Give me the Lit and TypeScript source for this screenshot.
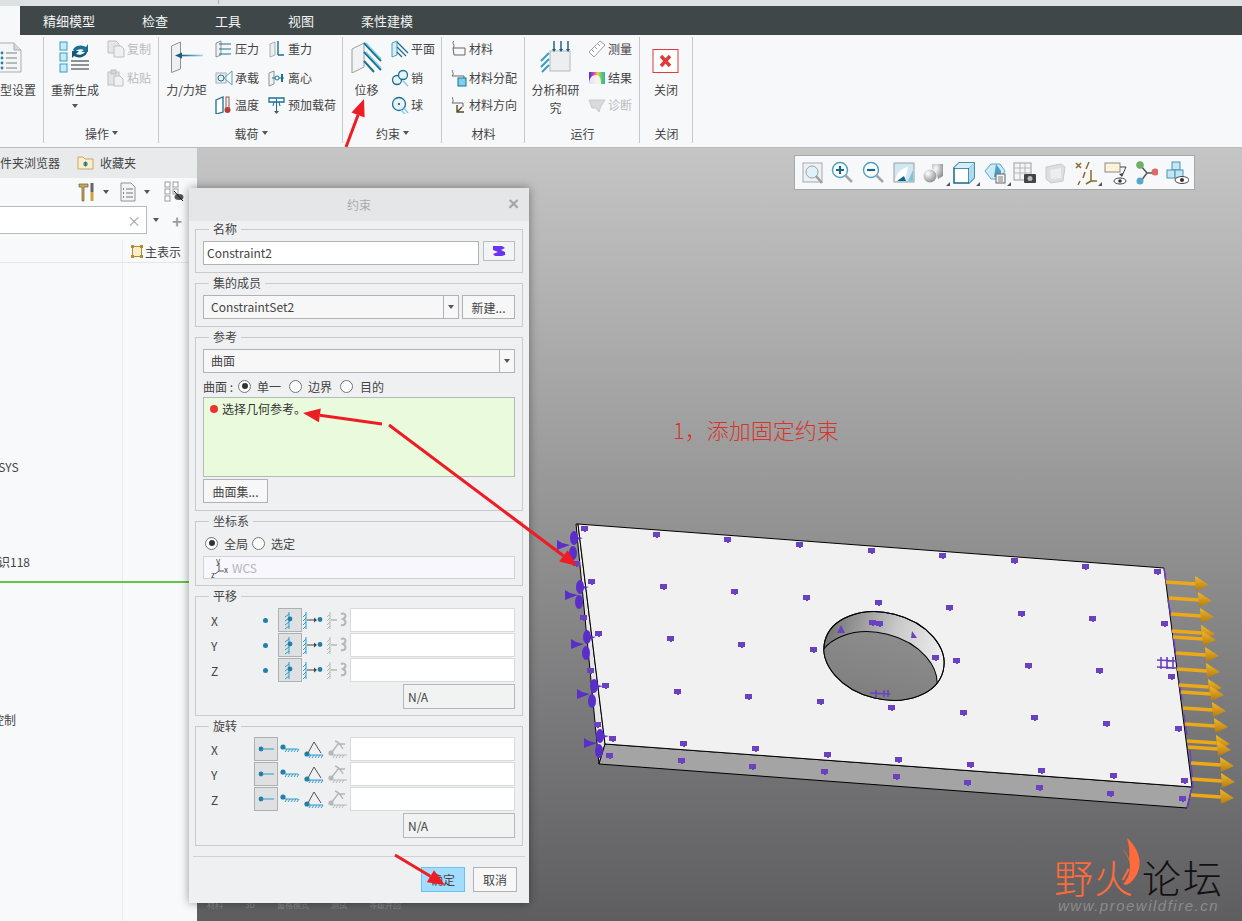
import { LitElement, html, css, svg } from "lit";
import { customElement } from "lit/decorators.js";

const TEAL = "#1c6f92";
const SKY = "#79cdea";
const GREY = "#a9aeb2";

// ---- ribbon icons, big ones are 32x32
const bigIcons: Record<string, unknown> = {
  doc: svg`<path d="M3 2h15l7 7v22H3z" fill="#f3f5f7" stroke="#a8adb1"/><path d="M18 2v7h7" fill="#d5dadd" stroke="#a8adb1"/>
    <g fill="#2a7ea6"><circle cx="6" cy="12" r="1.4"/><circle cx="6" cy="17" r="1.4"/><circle cx="6" cy="22" r="1.4"/><circle cx="6" cy="27" r="1.4"/></g>
    <path d="M10 12h11M10 17h11M10 22h11M10 27h11" stroke="#7b8186"/>`,
  regen: svg`<g fill="#c4ecf8" stroke="#3a9cc0"><rect x="1" y="1" width="7" height="8"/><rect x="1" y="12" width="7" height="8"/><rect x="1" y="23" width="7" height="8"/></g>
    <path d="M14 9a8 6 0 0 1 13-3l2-3v8h-7l3-2a6 4 0 0 0-9 2z" fill="${TEAL}"/><path d="M28 11a8 6 0 0 1-13 4l-2 2V10h7l-3 3a6 4 0 0 0 9-2z" fill="#125a78"/>
    <path d="M12 20h18M12 24h18M12 28h18" stroke="#8d9296" stroke-width="2"/>`,
  force: svg`<path d="M0.500 5l9-4v27l-9 3.500z" fill="#eef0f1" stroke="#8e9396"/><path d="M4 14.500l7-3v6z" fill="#155f80"/>
    <path d="M10 14.500h22" stroke="url(#fade)" stroke-width="1.600"/>`,
  disp: svg`<path d="M1 8l12-6v24L1 32z" fill="#f1f2f3" stroke="#9a9ea1"/>
    <path d="M13 2l17 18M13 11l17 18M13 20l10 11" stroke="${TEAL}" stroke-width="2"/><path d="M15 2l15 16M15 11l15 16" stroke="${SKY}" stroke-width="1.200"/>`,
  run: svg`<rect x="10" y="10" width="20" height="20" fill="#eceef0" stroke="#b6babc"/>
    <path d="M14 0v8M21 0v8M28 0v8" stroke="#165c7d" stroke-width="1.4"/><path d="M12 8l2 3 2-3zM19 8l2 3 2-3zM26 8l2 3 2-3z" fill="#165c7d"/>
    <path d="M1 20l8-8M1 26l8-8M2 31l7-7" stroke="#3a9cc0" stroke-width="2"/>`,
  close: svg`<rect x="3" y="8.5" width="25" height="23" fill="#fff" stroke="#e0393e"/><path d="M11 15l9 10M20 15l-9 10" stroke="#e0393e" stroke-width="3.4"/>`,
};

// small ones are 18x18
const smallIcons: Record<string, unknown> = {
  copy: svg`<path d="M1 1h8l3 3v9H1z" fill="#e4e6e8" stroke="#bdc1c4"/><path d="M7 6h7l3 3v8H7z" fill="#eef0f1" stroke="#bdc1c4"/>`,
  paste: svg`<rect x="1" y="3" width="11" height="13" fill="#e2e4e6" stroke="#bdc1c4"/><rect x="4" y="1" width="5" height="4" fill="#d2d5d8" stroke="#bdc1c4"/><path d="M7 7h6l3 3v7H7z" fill="#f0f1f2" stroke="#bdc1c4"/>`,
  press: svg`<path d="M1 3l5-2v14l-5 2z" fill="#f0f1f2" stroke="#8e9396"/><path d="M4 4h12M4 9h12M4 14h12" stroke="${TEAL}" stroke-width="1.2"/>`,
  grav: svg`<path d="M2 4l5-2v13l-5 2z" fill="#eceeef" stroke="${GREY}"/><path d="M10 1v14M10 15h6" stroke="${TEAL}" stroke-width="1.4"/>`,
  bear: svg`<rect x="1" y="4" width="10" height="10" fill="#eceeef" stroke="${GREY}"/><circle cx="6" cy="9" r="3" fill="none" stroke="${TEAL}"/><path d="M9 9l8-7v14z" fill="none" stroke="#5f9fb8"/>`,
  cent: svg`<path d="M1 4l5-2v13l-5 2z" fill="#f0f1f2" stroke="#8e9396"/><path d="M4 9h12" stroke="${TEAL}"/><circle cx="9" cy="9" r="2" fill="#fff" stroke="${TEAL}"/><path d="M14 5v8" stroke="${TEAL}" stroke-width="2"/>`,
  temp: svg`<path d="M1 4l7-3v15l-7 2z" fill="#fff" stroke="${TEAL}" stroke-width="1.3"/><rect x="11" y="1" width="3" height="12" fill="#f1f2f3" stroke="#8b5a55"/><circle cx="12.5" cy="14" r="3" fill="#b5403a"/>`,
  preload: svg`<path d="M1 2h15v4H1z" fill="#fff" stroke="${TEAL}" stroke-width="1.3"/><path d="M6 6l-1 4M11 6l1 4M8.5 3v13" stroke="${TEAL}"/><path d="M6 15h5l-2.500 3z" fill="#555"/>`,
  plane: svg`<path d="M1 3l5-2v14l-5 2z" fill="#d8eef7" stroke="#4a9fc0"/><path d="M6 2l11 11M6 7l9 9M6 12l5 5" stroke="${TEAL}" stroke-width="1.3"/>`,
  pin: svg`<circle cx="6" cy="11" r="4.500" fill="#e6f4fa" stroke="${TEAL}" stroke-width="1.3"/><circle cx="12" cy="6" r="4.500" fill="#e6f4fa" stroke="${TEAL}" stroke-width="1.3"/><path d="M12 12l5 5" stroke="${SKY}" stroke-width="1.4"/>`,
  ball: svg`<circle cx="8" cy="8" r="6.500" fill="#e6f4fa" stroke="${TEAL}" stroke-width="1.3"/><circle cx="8" cy="8" r="1" fill="#333"/><path d="M13 12l4 5M10 14l4 4" stroke="${SKY}" stroke-width="1.3"/>`,
  mat: svg`<path d="M5 1c-3 2 2 4-1 7M4 8h12v7H5z" fill="none" stroke="#666"/>`,
  matAssign: svg`<path d="M4 1c-2 2 2 3-1 6h12v5" fill="none" stroke="#666"/><rect x="9" y="9" width="8" height="8" fill="#7fd0ee" stroke="${TEAL}"/>`,
  matDir: svg`<path d="M4 1c-2 2 2 3-1 6h11v4" fill="none" stroke="#666"/><path d="M8 9v7h7M8 16l5-5" fill="none" stroke="#5b4a2a" stroke-width="1.4"/>`,
  measure: svg`<path d="M1 12L12 1l5 4L6 17z" fill="#fff" stroke="#9aa0a4"/><path d="M4 10l2 2M7 7l2 2M10 4l2 2" stroke="#9aa0a4"/>`,
  result: svg`<rect x="1" y="3" width="16" height="12" fill="url(#rainbow)"/><path d="M1 15c0-6 3-9 7-9s5 4 5 9" fill="#f7f8fa" opacity=".9"/>`,
  diag: svg`<path d="M1 4h16l-4 6-2 6-3-4H4z" fill="#d8dbdd" stroke="#c7cacc"/>`,
};

// ---- view toolbar, 24x24 each
const viewIcons = [
  svg`<rect x="2" y="2" width="19" height="19" fill="#eef0f2" stroke="#a6abae"/><circle cx="11" cy="11" r="6" fill="#dff1f9" stroke="#8fa9b5"/><path d="M15 15l6 7" stroke="#9aa0a4" stroke-width="2.500"/>`,
  svg`<circle cx="9" cy="9" r="7.500" fill="#fff" stroke="#4d9fbe" stroke-width="1.4"/><path d="M5 9h8M9 5v8" stroke="#17698c" stroke-width="2.200"/><path d="M14 14l7 7" stroke="#a2a7aa" stroke-width="2.500"/>`,
  svg`<circle cx="9" cy="9" r="7.500" fill="#fff" stroke="#4d9fbe" stroke-width="1.4"/><path d="M5 9h8" stroke="#17698c" stroke-width="2.200"/><path d="M14 14l7 7" stroke="#a2a7aa" stroke-width="2.500"/>`,
  svg`<rect x="2" y="2" width="20" height="19" fill="#d2e8f0" stroke="#9aa0a4"/><path d="M3 20c1-8 7-13 13-14l-3 14z" fill="#fff"/><path d="M5 20l7-5 2 5z" fill="#14688c"/><path d="M16 20l5-11v11z" fill="#7cc4df"/>`,
  svg`<circle cx="8" cy="15" r="6.500" fill="url(#ball)"/><path d="M10 3h11v12l-5 3-2-8-4-2z" fill="url(#ball)"/>`,
  svg`<path d="M2 7h15v15H2zM2 7l5-5h15v15l-5 5M17 7l5-5" fill="#fff" stroke="#14688c" stroke-width="1.500"/><path d="M17 7l5-5v15l-5 5z" fill="#a9dcef"/><path d="M2 7l5-5h15l-5 5z" fill="#d5eef7"/>`,
  svg`<path d="M2 10l6-7h9l5 7-5 8H8z" fill="#cdeaf6" stroke="#5aa7c6"/><path d="M13 3l5 7v6h-7z" fill="#4d9fc2"/><rect x="13" y="13" width="9" height="9" fill="#f1f2f3" stroke="#666"/><path d="M15 16h5M15 18h5M15 20h5" stroke="#666" stroke-width=".8"/>`,
  svg`<rect x="1" y="2" width="17" height="17" fill="#f4f5f6" stroke="#9a9ea1"/><path d="M1 7h17M1 12h17M7 2v17M12 2v17" stroke="#b4b8bb"/><rect x="11" y="13" width="12" height="9" rx="1" fill="#444"/><circle cx="17" cy="17.500" r="2.500" fill="#bbb"/>`,
  svg`<path d="M3 6l15-3 4 3-2 14-12 2-5-4z" fill="#dcdfe1" stroke="#c8cbcd"/><path d="M7 9l11-2v10l-10 1z" fill="#eceeef"/>`,
  svg`<g stroke="#8a6a2a" stroke-width="1.500"><path d="M2 2l5 5M7 2L2 7M15 1l-3 7M11 11l-2 6M6 20l-2 4"/></g><path d="M17 9v11h6M17 20l-5 3" fill="none" stroke="#8a6a2a" stroke-width="1.500"/>`,
  svg`<rect x="1" y="2" width="15" height="9" fill="#fbf2d9" stroke="#8b8b80"/><path d="M16 6h6l-4 9" fill="none" stroke="#444"/><path d="M15 13l3 3 1-4z" fill="#444"/><ellipse cx="16" cy="20" rx="6" ry="3" fill="#fff" stroke="#444"/><circle cx="16" cy="20" r="1.800" fill="#333"/>`,
  svg`<path d="M7 5l6 7-6 8M13 12h7" fill="none" stroke="#555" stroke-width="1.500"/><circle cx="6" cy="4" r="3.500" fill="#6fb36a" stroke="#5a9557" stroke-width=".5"/><circle cx="21" cy="11" r="3.500" fill="#dc6a6a"/><circle cx="6" cy="20" r="3.500" fill="#57a6cc"/>`,
  svg`<g fill="#c3e6f4" stroke="#4d93b1"><rect x="7" y="1" width="8" height="8"/><rect x="2" y="9" width="8" height="8"/><rect x="10" y="9" width="8" height="8"/></g><ellipse cx="17" cy="19" rx="7" ry="3.500" fill="#fff" stroke="#444"/><circle cx="17" cy="19" r="2" fill="#333"/>`,
];
const viewHasCorner = [false, false, false, false, true, true, true, false, false, true, false, false, false];

// ---- dialog dof icons, 22x24
const dofIcons = {
  fixed: svg`<path d="M10 4v17M10 6l-4 3M10 10l-4 3M10 14l-4 3M10 18l-4 3" stroke="#2b9ccb" fill="none"/><circle cx="11" cy="11" r="2.400" fill="#237fa6"/>`,
  slide: svg`<path d="M3 4v17M3 6l-3 3M3 10l-3 3M3 14l-3 3M3 18l-3 3" stroke="#2b9ccb" fill="none"/><path d="M4 12h9" stroke="#444"/><path d="M11 9.500l3 2.500-3 2.500z" fill="#444"/><circle cx="17" cy="11.500" r="2.400" fill="#237fa6"/>`,
  user: svg`<path d="M3 4v17M3 6l-3 3M3 10l-3 3M3 14l-3 3M3 18l-3 3" stroke="#b5b8ba" fill="none"/><path d="M4 12h6" stroke="#999"/><path d="M14 6c5-2 6 3 2 5 4 2 3 7-2 6" fill="none" stroke="#b5b8ba" stroke-width="2"/>`,
  rotFixed: svg`<circle cx="4" cy="10" r="2.600" fill="#237fa6"/><path d="M6 12h13" stroke="#2b9ccb"/><path d="M8 12l-2 3M11 12l-2 3M14 12l-2 3M17 12l-2 3M20 12l-2 3" stroke="#2b9ccb"/>`,
  rotAngle: svg`<circle cx="4" cy="17" r="2.600" fill="#237fa6"/><path d="M5 16L11 5l7 11" fill="none" stroke="#555"/><path d="M5 18h15M8 18l-2 3M11 18l-2 3M14 18l-2 3M17 18l-2 3M20 18l-2 3" stroke="#2b9ccb"/>`,
  rotUser: svg`<circle cx="4" cy="16" r="2.600" fill="#b4b7b9"/><path d="M5 15l6-8h7M8 4c4 1 6 4 8 8" fill="none" stroke="#b4b7b9" stroke-width="1.400"/><path d="M5 18h15M8 18l-2 3M11 18l-2 3M14 18l-2 3M17 18l-2 3" stroke="#b4b7b9"/>`,
};

// ---- mesh of the plate, read off the reference
const marks = [
  [584,529],[656,535],[727,540],[799,545],[871,551],[942,556],[1014,561],[1085,567],[1157,572],
  [591,582],[663,587],[734,592],[806,598],[878,603],[949,608],[1021,614],[1092,619],[1164,624],
  [598,634],[670,639],[741,645],[813,650],[956,661],[1028,666],[1099,671],[1171,677],
  [605,686],[677,692],[748,697],[820,702],[891,708],[963,713],[1034,718],[1106,724],[1178,729],
  [612,739],[683,744],[755,749],[827,755],[898,760],[970,765],[1041,771],[1113,776],[1184,781],
  [609,756],[681,761],[752,767],[824,772],[896,777],[967,783],[1039,788],[1110,794],[1182,799],
  [872,623],[879,624],[935,658],[576,564],[583,618],[590,671],[597,725],
];
const clusters = [
  [574,538,563,545,573,553],[580,587,571,595,579,602],[587,637,577,644,586,653],
  [594,686,583,694,592,701],[600,736,590,743,599,751],
];
const loads = [
  [1166,582],[1169,598],[1171,614],[1172,631],[1173,637],[1176,653],[1177,669],[1179,685],[1181,692],
  [1183,708],[1185,724],[1187,741],[1188,747],[1191,763],[1192,779],[1191,795],
];

const redArrow = (x1: number, y1: number, x2: number, y2: number) => {
  const a = Math.atan2(y2 - y1, x2 - x1);
  const bx = x2 - 17 * Math.cos(a);
  const by = y2 - 17 * Math.sin(a);
  const nx = -Math.sin(a) * 7;
  const ny = Math.cos(a) * 7;
  return svg`<line x1=${x1} y1=${y1} x2=${bx} y2=${by} stroke="#ee1c25" stroke-width="3"/>
    <polygon points="${x2},${y2} ${bx + nx},${by + ny} ${bx - nx},${by - ny}" fill="#ee1c25"/>`;
};

@customElement("app-root")
export class AppRoot extends LitElement {
  static styles = css`
    :host {
      display: block;
      position: relative;
      width: 1242px;
      height: 921px;
      overflow: hidden;
      font-family: "Noto Sans CJK SC", "Open Sans", sans-serif;
      font-size: 12px;
      color: #444;
      background: #f7f8fa;
    }
    svg { display: block; }
    .defs { position: absolute; }

    .strip { position: relative; height: 6px; background: #dde1e1; }
    .strip::after {
      content: "";
      position: absolute;
      left: 218px;
      top: 0;
      width: 1px;
      height: 4px;
      background: #a9adad;
    }
    .tabs {
      display: flex;
      gap: 47px;
      height: 29px;
      margin-left: 20px;
      padding-left: 23px;
      align-items: center;
      background: #3f4748;
      color: #f1f3f3;
      font-size: 13px;
    }

    /* ribbon */
    .ribbon {
      display: flex;
      height: 112px;
      background: #f7f8fa;
      border-bottom: 1px solid #b9bcbc;
    }
    .group {
      position: relative;
      display: flex;
      flex-direction: column;
      overflow: hidden;
      flex: none;
    }
    .group::after {
      content: "";
      position: absolute;
      right: 0;
      top: 2px;
      bottom: 4px;
      width: 1px;
      background: #c6c9c9;
    }
    .group-body { display: flex; flex: 1; gap: 8px; }
    .group-name {
      display: flex;
      justify-content: center;
      align-items: center;
      gap: 3px;
      height: 18px;
      margin-bottom: 5px;
    }
    .caret {
      width: 0;
      height: 0;
      border: 3.5px solid transparent;
      border-top: 4px solid #555;
      border-bottom: 0;
    }
    .big {
      display: flex;
      flex-direction: column;
      align-items: center;
      flex: none;
      padding-top: 6px;
      text-align: center;
      line-height: 18px;
    }
    .big span { margin-top: 8px; }
    .big .caret { margin-top: 5px; }
    .pull-left { margin-left: -12px; }
    .col {
      display: grid;
      grid-template-rows: 29px 27px 18px;
      padding-top: 5px;
      flex: none;
    }
    .small { display: flex; align-items: center; gap: 2px; height: 18px; line-height: 18px; }
    .off { color: #b9bcbf; }
    .cols { display: flex; gap: 9px; }

    /* main area */
    .main { display: flex; height: 773px; }
    .side { width: 197px; flex: none; display: flex; flex-direction: column; background: #f8f9fb; }
    .side-tabs {
      display: flex;
      align-items: center;
      height: 30px;
      padding-bottom: 2px;
      box-sizing: border-box;
      background: #e8eaeb;
      overflow: hidden;
      flex: none;
    }
    .side-tabs .first { margin-left: -12px; width: 72px; white-space: nowrap; }
    .side-tabs .fav { display: flex; align-items: center; gap: 6px; margin-left: 17px; }
    .side-tools { display: flex; align-items: center; height: 28px; padding-left: 78px; flex: none; }
    .side-tools .caret { margin: 0 0 0 8px; }
    .side-tools .list { margin-left: 11px; }
    .side-tools .struct { margin-left: 14px; }
    .side-search { display: flex; align-items: center; height: 28px; flex: none; }
    .search-box {
      display: flex;
      align-items: center;
      justify-content: flex-end;
      width: 147px;
      height: 28px;
      box-sizing: border-box;
      padding-right: 5px;
      background: #fff;
      border: 1px solid #b6bcbc;
      border-left: 0;
      color: #a0a4a6;
      font-size: 14px;
    }
    .plus { margin-left: 13px; color: #9a9ea1; font-size: 17px; font-weight: 700; line-height: 1; }
    .side-search .caret { margin-left: 6px; }
    .tree { position: relative; flex: 1; display: grid; grid-template-columns: 123px 1fr; }
    .tree-col { border-right: 1px solid #e9ebec; margin-top: 6px; }
    .tree-head {
      position: absolute;
      left: 0;
      right: 0;
      top: 6px;
      height: 22px;
      border-bottom: 1px solid #e4e6e7;
      display: flex;
      align-items: center;
      gap: 2px;
      padding-left: 131px;
    }
    .tree-row { position: absolute; white-space: nowrap; line-height: 16px; }
    .tree-row.csys { top: 225px; left: -11px; }
    .tree-row.mark { top: 320px; left: -14px; }
    .tree-row.ctrl { top: 478px; left: -8px; }
    .tree-line { position: absolute; left: 0; right: 0; top: 347px; height: 2px; background: #62c544; }

    .view {
      position: relative;
      flex: 1;
      background: linear-gradient(#c5c5c5, #5e5e60);
    }
    .view-tools {
      position: absolute;
      left: 597px;
      top: 7px;
      display: flex;
      gap: 6.3px;
      padding: 4px 5px 3px 6px;
      background: #f7f8fa;
      border: 1px solid #a7a9a9;
      height: 26px;
      align-items: center;
    }
    .tool { position: relative; width: 24px; height: 24px; }
    .tool.corner::after {
      content: "";
      position: absolute;
      right: -4px;
      bottom: -1px;
      border: 2.5px solid transparent;
      border-right-color: #555;
      border-bottom-color: #555;
    }
    .model { position: absolute; inset: 0; }
    .note {
      position: absolute;
      left: 476px;
      top: 265px;
      color: #d9342b;
      font-size: 22px;
      font-weight: 300;
      line-height: 32px;
    }
    .status {
      position: absolute;
      left: 10px;
      top: 751px;
      display: flex;
      gap: 22px;
      color: #87878b;
      font-size: 8px;
      line-height: 12px;
    }
    .brand { position: absolute; left: 857px; top: 708px; width: 188px; height: 65px; }
    .brand .fire, .brand .forum {
      position: absolute;
      top: 0;
      font-size: 39px;
      font-weight: 300;
      line-height: 40px;
    }
    .brand .fire { left: 0; color: #ff6b3a; letter-spacing: 1px; }
    .brand .forum { left: 88px; color: #111; letter-spacing: 2px; }
    .brand .url {
      position: absolute;
      left: 4px;
      top: 41px;
      color: #8b8b8d;
      font: italic 15px/17px "Liberation Sans", sans-serif;
      letter-spacing: 1.5px;
      white-space: nowrap;
    }

    /* dialog */
    .dialog {
      position: absolute;
      left: 189px;
      top: 188px;
      width: 340px;
      height: 715px;
      box-sizing: border-box;
      background: #eff0f2;
      box-shadow: 0 0 9px rgba(0, 0, 0, 0.4);
      display: flex;
      flex-direction: column;
    }
    .title {
      position: relative;
      height: 33px;
      flex: none;
      display: flex;
      align-items: center;
      justify-content: center;
      background: #e5e6e8;
      color: #a9abad;
    }
    .title b {
      position: absolute;
      right: 10px;
      top: 7px;
      color: #a4a7a9;
      font: 700 19px/18px "Liberation Sans", sans-serif;
    }
    .sets { display: flex; flex-direction: column; gap: 2px; padding: 0 6px; }
    fieldset {
      margin: 0;
      padding: 4px 7px 7px;
      border: 1px solid #c8cacb;
      min-width: 0;
    }
    fieldset.snug { padding-bottom: 6px; }
    fieldset.last { padding-top: 3px; }
    legend { margin-left: 6px; padding: 0 4px; line-height: 16px; }
    .row { display: flex; align-items: center; }
    .field {
      box-sizing: border-box;
      flex: 1;
      height: 24px;
      line-height: 22px;
      padding-left: 3px;
      background: #fff;
      border: 1px solid #b0b2b3;
    }
    .name-btn {
      display: flex;
      align-items: center;
      justify-content: center;
      box-sizing: border-box;
      width: 32px;
      height: 20px;
      margin: 0 0 4px 4px;
      background: #f3f4f5;
      border: 1px solid #bbbdbe;
    }
    .member { gap: 3px; }
    .select {
      display: flex;
      box-sizing: border-box;
      flex: 1;
      height: 24px;
      line-height: 22px;
      background: #f7f7f8;
      border: 1px solid #b0b2b3;
    }
    .select.whole { flex: none; }
    .select > span { flex: 1; padding-left: 7px; }
    .select > i {
      display: flex;
      align-items: center;
      justify-content: center;
      width: 14px;
      border-left: 1px solid #b0b2b3;
    }
    .btn {
      display: flex;
      align-items: center;
      justify-content: center;
      box-sizing: border-box;
      height: 24px;
      background: #f7f7f8;
      border: 1px solid #b0b2b3;
    }
    .btn.new { width: 53px; }
    .btn.surfaces { width: 65px; margin-top: 2px; }
    .radios { height: 20px; margin-top: 3px; margin-bottom: 1px; }
    .radios .lead { width: 35px; }
    .radios .opt { margin: 0 8px 0 6px; }
    .radios .opt.end { margin: 0 0 0 7px; }
    .csys { height: 20px; padding-left: 2px; }
    .csys .opt { margin: 0 4px 0 6px; }
    .csys .opt.end { margin: 0 0 0 6px; }
    .radio {
      box-sizing: border-box;
      display: flex;
      align-items: center;
      justify-content: center;
      width: 13px;
      height: 13px;
      border: 1px solid #747678;
      border-radius: 50%;
      background: #fff;
      flex: none;
    }
    .radio.on::after { content: ""; width: 6px; height: 6px; border-radius: 50%; background: #333; }
    .pick {
      box-sizing: border-box;
      height: 80px;
      padding: 3px 0 0 6px;
      background: #eafbdd;
      border: 1px solid #b6b9b9;
      display: flex;
      gap: 4px;
      line-height: 16px;
      color: #333;
    }
    .pick i {
      width: 8px;
      height: 8px;
      margin-top: 4px;
      border-radius: 50%;
      background: #ef3131;
    }
    .wcs {
      display: flex;
      align-items: center;
      gap: 3px;
      box-sizing: border-box;
      height: 23px;
      margin-top: 3px;
      padding-left: 7px;
      background: #f8f7fd;
      border: 1px solid #d0d2d3;
      color: #b4b5bd;
    }
    .dofs { display: flex; flex-direction: column; gap: 1px; }
    .dof { display: flex; align-items: stretch; height: 24px; }
    .axis { flex: 1; display: flex; align-items: center; justify-content: space-between; padding: 0 10px 0 8px; }
    .slot { width: 24px; display: flex; align-items: center; justify-content: center; flex: none; box-sizing: border-box; }
    .slot.set { background: #dfe0e2; border: 1px solid #aeb0b1; }
    .slot.first-rot { margin-left: -24px; }
    .dof .value { width: 165px; background: #fff; border: 1px solid #d8dadb; box-sizing: border-box; }
    .dot { width: 5px; height: 5px; border-radius: 50%; background: #237fa6; }
    .na {
      box-sizing: border-box;
      width: 112px;
      height: 25px;
      line-height: 23px;
      margin: 1px 0 0 auto;
      padding-left: 4px;
      background: #f1f2f2;
      border: 1px solid #b5b7b8;
    }
    .actions {
      display: flex;
      justify-content: flex-end;
      gap: 8px;
      margin: 10px 4px 0;
      padding: 10px 8px 0 0;
      border-top: 1px solid #cfd1d2;
    }
    .actions .btn { width: 44px; height: 25px; }
    .actions .ok { background: #a2dcff; border-color: #6ec0ee; }

    .marks { position: absolute; inset: 0; pointer-events: none; }
  `;

  private ic(name: string) {
    return html`<svg width="18" height="18" viewBox="0 0 18 18">${smallIcons[name]}</svg>`;
  }

  private bigBtn(icon: string, label: string, width: number, caret = false) {
    return html`<div class="big" style="width:${width}px">
      <svg width="32" height="32" viewBox="0 0 32 32">${bigIcons[icon]}</svg>
      <span>${label}</span>
      ${caret ? html`<i class="caret"></i>` : ""}
    </div>`;
  }

  private col(items: [string, string, boolean?][]) {
    return html`<div class="col">
      ${items.map(
        ([i, t, off]) => html`<div class="small ${off ? "off" : ""}">${this.ic(i)}<span>${t}</span></div>`
      )}
    </div>`;
  }

  private group(width: number, pad: number, name: string, caret: boolean, body: unknown) {
    return html`<section class="group" style="width:${width}px">
      <div class="group-body" style="padding-left:${pad}px">${body}</div>
      <div class="group-name">${name}${caret ? html`<i class="caret"></i>` : ""}</div>
    </section>`;
  }

  private ribbon() {
    return html`<div class="ribbon">
      ${this.group(44, 0, "", false, html`<div class="pull-left">${this.bigBtn("doc", "模型设置", 48)}</div>`)}
      ${this.group(115, 7, "操作", true, html`
        ${this.bigBtn("regen", "重新生成", 48, true)}
        ${this.col([["copy", "复制", true], ["paste", "粘贴", true]])}
      `)}
      ${this.group(184, 7, "载荷", true, html`
        ${this.bigBtn("force", "力/力矩", 41)}
        <div class="cols">
          ${this.col([["press", "压力"], ["bear", "承载"], ["temp", "温度"]])}
          ${this.col([["grav", "重力"], ["cent", "离心"], ["preload", "预加载荷"]])}
        </div>
      `)}
      ${this.group(99, 7, "约束", true, html`
        ${this.bigBtn("disp", "位移", 33)}
        ${this.col([["plane", "平面"], ["pin", "销"], ["ball", "球"]])}
      `)}
      ${this.group(83, 7, "材料", false, this.col([["mat", "材料"], ["matAssign", "材料分配"], ["matDir", "材料方向"]]))}
      ${this.group(115, 6, "运行", false, html`
        ${this.bigBtn("run", "分析和研究", 49)}
        ${this.col([["measure", "测量"], ["result", "结果"], ["diag", "诊断", true]])}
      `)}
      ${this.group(53, 0, "关闭", false, this.bigBtn("close", "关闭", 52))}
    </div>`;
  }

  private side() {
    return html`<aside class="side">
      <div class="side-tabs">
        <span class="first">文件夹浏览器</span>
        <span class="fav">
          <svg width="17" height="15" viewBox="0 0 17 15">
            <path d="M1 2h5l2 2h8v10H1z" fill="#fbeeca" stroke="#c9a765"/>
            <path d="M6 9h5M8.500 6.500v5M7 7l3 4M10 7l-3 4" stroke="#1d6f92"/>
          </svg>
          收藏夹
        </span>
      </div>
      <div class="side-tools">
        <svg width="17" height="20" viewBox="0 0 17 20">
          <path d="M1 2h9v3H6v14H4V5H1z" fill="#c9a865" stroke="#6e5a2e" stroke-width=".7"/>
          <rect x="12.500" y="1" width="3" height="9" fill="#666"/><rect x="12.500" y="10" width="3" height="9" fill="#d0a040"/>
        </svg>
        <i class="caret"></i>
        <svg class="list" width="16" height="20" viewBox="0 0 16 20">
          <path d="M1 1h10l4 4v14H1z" fill="#f3f4f5" stroke="#8f9497"/>
          <path d="M6 7h7M6 11h7M6 15h7" stroke="#777"/><path d="M3 7h1M3 11h1M3 15h1" stroke="#1d6f92" stroke-width="1.500"/>
        </svg>
        <i class="caret"></i>
        <svg class="struct" width="20" height="22" viewBox="0 0 20 22">
          <g fill="#fff" stroke="#9a9ea1"><rect x="1" y="1" width="5" height="5"/><rect x="1" y="8" width="5" height="5"/><rect x="1" y="15" width="5" height="5"/><rect x="9" y="1" width="5" height="5"/><rect x="9" y="8" width="5" height="5"/></g>
          <ellipse cx="15" cy="16" rx="4.500" ry="3" fill="#555"/><path d="M10 10l9 10" stroke="#111"/>
        </svg>
      </div>
      <div class="side-search">
        <div class="search-box">×</div>
        <i class="caret"></i>
        <span class="plus">+</span>
      </div>
      <div class="tree">
        <div class="tree-col"></div>
        <div></div>
        <div class="tree-head">
          <svg width="12" height="13" viewBox="0 0 12 13">
            <rect x="1.500" y="1.500" width="9" height="10" fill="#fbeec5" stroke="#b28a3a"/>
            <path d="M0 0h3v3H0zM9 0h3v3H9zM0 10h3v3H0zM9 10h3v3H9z" fill="#b28a3a"/>
          </svg>
          主表示
        </div>
        <div class="tree-row csys">CSYS</div>
        <div class="tree-row mark">标识118</div>
        <div class="tree-line"></div>
        <div class="tree-row ctrl">控制</div>
      </div>
    </aside>`;
  }

  private model() {
    return html`<svg class="model" width="1045" height="773" viewBox="197 148 1045 773">
      <defs>
        <linearGradient id="wall" gradientUnits="userSpaceOnUse" x1="825" y1="0" x2="943" y2="0">
          <stop offset="0" stop-color="#777"/><stop offset=".55" stop-color="#c9c9c9"/><stop offset="1" stop-color="#f0f0f0"/>
        </linearGradient>
        <linearGradient id="holeBg" x1="0" y1="0" x2="0" y2="1">
          <stop offset="0" stop-color="#8c8c8c"/><stop offset="1" stop-color="#7b7b7b"/>
        </linearGradient>
        <linearGradient id="cone" x1="0" y1="0" x2="0" y2="1">
          <stop offset="0" stop-color="#f4b828"/><stop offset="1" stop-color="#b27a10"/>
        </linearGradient>
        <clipPath id="hole"><ellipse cx="884" cy="656" rx="61" ry="43" transform="rotate(14 884 656)"/></clipPath>
      </defs>
      <polygon points="576,524 578,524 605,744 599,764" fill="#e6e6e6" stroke="#000"/>
      <polygon points="605,744 1192,787 1187,808 599,764" fill="#a4a4a4" stroke="#000"/>
      <polygon points="578,524 1164,568 1192,787 605,744" fill="#f1f1f2" stroke="#000"/>
      <ellipse cx="884" cy="656" rx="61" ry="43" transform="rotate(14 884 656)" fill="url(#wall)" stroke="#000"/>
      <g clip-path="url(#hole)">
        <ellipse cx="877" cy="676" rx="61" ry="43" transform="rotate(14 877 676)" fill="url(#holeBg)" stroke="#000"/>
      </g>
      <ellipse cx="884" cy="656" rx="61" ry="43" transform="rotate(14 884 656)" fill="none" stroke="#000"/>
      <g fill="#6a42c0">
        ${marks.map(([x, y]) => svg`<path d="M${x - 3} ${y - 3}h7v5h-2v1h-2v-1h-3z"/>`)}
        <path d="M841 625l4 8h-8z"/><path d="M912 631l5 7h-6z"/>
      </g>
      <g fill="#5a2fc9">
        ${clusters.map(
          ([a, b, c, d, e, f]) => svg`
            <ellipse cx=${a} cy=${b} rx="4" ry="7"/><path d="M${a + 3} ${b - 1}l6 1-6 2z"/>
            <path d="M${c - 6} ${d - 5}v10l5-2 8-3-8-2z"/>
            <ellipse cx=${e} cy=${f} rx="4" ry="7"/>
          `
        )}
      </g>
      <g stroke="#6a42c0" stroke-width="1.600">
        <path d="M1157 660l20 1M1157 667l20 1M1161 657v12M1167 657v12M1173 657v12"/>
        <path d="M870 693l20 1M876 690v7M884 690v7M888 690v7"/>
      </g>
      <path d="M1164 568l2 14M1168 600l3 16M1173 635l3 20M1179 680l3 20M1184 715l3 20M1190 750l3 38M1192 787l-5 21" fill="none" stroke="#6a42c0" stroke-width="1.500"/>
      ${loads.map(
        ([x, y]) => svg`
          <line x1=${x} y1=${y} x2=${x + 30} y2=${y + 2} stroke="#eda817" stroke-width="3.500"/>
          <polygon points="${x + 29},${y - 6} ${x + 43},${y + 3} ${x + 30},${y + 9}" fill="url(#cone)"/>
        `
      )}
      <path d="M1127 838c14 12 17 30 6 42-5 6-8 5-10 4 9-8 10-26-1-36 5 6 6 10 7 13 1-9 0-16-2-23z" fill="#ff6b3a"/>
    </svg>`;
  }

  private dofRows(kind: "move" | "rot") {
    const icons =
      kind === "move"
        ? [dofIcons.fixed, dofIcons.slide, dofIcons.user]
        : [dofIcons.rotFixed, dofIcons.rotAngle, dofIcons.rotUser];
    return html`<div class="dofs">
      ${["X", "Y", "Z"].map(
        (axis) => html`<div class="dof">
          <div class="axis">
            <span>${axis}</span>
            ${kind === "move" ? html`<i class="dot"></i>` : ""}
          </div>
          ${kind === "rot"
            ? html`<div class="slot set first-rot">
                <svg width="22" height="22" viewBox="0 0 22 22"><circle cx="6" cy="11" r="2.400" fill="#237fa6"/><path d="M8 11h11" stroke="#2b9ccb"/></svg>
              </div>`
            : ""}
          ${icons.map(
            (ic, i) => html`<div class="slot ${kind === "move" && i === 0 ? "set" : ""}">
              <svg width="22" height="24" viewBox="0 0 22 24">${ic}</svg>
            </div>`
          )}
          <div class="value"></div>
        </div>`
      )}
      <div class="na">N/A</div>
    </div>`;
  }

  private dialog() {
    return html`<div class="dialog">
      <div class="title">约束<b>×</b></div>
      <div class="sets">
        <fieldset>
          <legend>名称</legend>
          <div class="row">
            <div class="field">Constraint2</div>
            <div class="name-btn">
              <svg width="14" height="12" viewBox="0 0 14 12"><path d="M1 1h9l3 2-4 2 4 2v3l-3 1H3L1 9l5-2-5-2z" fill="#6a33f0"/></svg>
            </div>
          </div>
        </fieldset>
        <fieldset>
          <legend>集的成员</legend>
          <div class="row member">
            <div class="select"><span>ConstraintSet2</span><i><i class="caret"></i></i></div>
            <div class="btn new">新建...</div>
          </div>
        </fieldset>
        <fieldset>
          <legend>参考</legend>
          <div class="select whole"><span>曲面</span><i><i class="caret"></i></i></div>
          <div class="row radios">
            <span class="lead">曲面 :</span><i class="radio on"></i>
            <span class="opt">单一</span><i class="radio"></i>
            <span class="opt">边界</span><i class="radio"></i>
            <span class="opt end">目的</span>
          </div>
          <div class="pick"><i></i>选择几何参考。</div>
          <div class="btn surfaces">曲面集...</div>
        </fieldset>
        <fieldset class="snug">
          <legend>坐标系</legend>
          <div class="row csys">
            <i class="radio on"></i><span class="opt">全局</span>
            <i class="radio"></i><span class="opt end">选定</span>
          </div>
          <div class="wcs">
            <svg width="18" height="20" viewBox="0 0 18 20">
              <path d="M8 5v8h5M8 13l-4 3" fill="none" stroke="#555"/>
              <text x="5" y="6" font-size="8" fill="#444">y</text><text x="13" y="15" font-size="8" fill="#444">x</text><text x="0" y="20" font-size="8" fill="#444">z</text>
            </svg>
            WCS
          </div>
        </fieldset>
        <fieldset class="snug">
          <legend>平移</legend>
          ${this.dofRows("move")}
        </fieldset>
        <fieldset class="last">
          <legend>旋转</legend>
          ${this.dofRows("rot")}
        </fieldset>
      </div>
      <div class="actions">
        <div class="btn ok">确定</div>
        <div class="btn">取消</div>
      </div>
    </div>`;
  }

  render() {
    return html`
      <div class="strip"></div>
      <nav class="tabs">
        ${["精细模型", "检查", "工具", "视图", "柔性建模"].map((t) => html`<span>${t}</span>`)}
      </nav>
      ${this.ribbon()}
      <svg class="defs" width="0" height="0">
        <defs>
          <linearGradient id="fade" gradientUnits="userSpaceOnUse" x1="10" y1="0" x2="32" y2="0"><stop offset="0" stop-color="#155f80"/><stop offset="1" stop-color="#9adcf0"/></linearGradient>
          <linearGradient id="rainbow" x1="0" y1="0" x2="1" y2="0">
            <stop offset="0" stop-color="#3a3ad0"/><stop offset=".3" stop-color="#e040c0"/><stop offset=".55" stop-color="#f0d040"/><stop offset=".8" stop-color="#50d060"/><stop offset="1" stop-color="#40a0e0"/>
          </linearGradient>
          <radialGradient id="ball" cx=".35" cy=".3" r=".9"><stop offset="0" stop-color="#fff"/><stop offset="1" stop-color="#777"/></radialGradient>
        </defs>
      </svg>
      <div class="main">
        ${this.side()}
        <div class="view">
          ${this.model()}
          <div class="view-tools">
            ${viewIcons.map(
              (ic, i) => html`<div class="tool ${viewHasCorner[i] ? "corner" : ""}">
                <svg width="24" height="24" viewBox="0 0 24 24">${ic}</svg>
              </div>`
            )}
          </div>
          <div class="note">1，添加固定约束</div>
          <div class="status">
            <span>材料</span><span>3D</span><span>窗格模式</span><span>测试</span><span>等级并回</span>
          </div>
          <div class="brand">
            <span class="fire">野火</span>
            <span class="forum">论坛</span>
            <span class="url">www.proewildfire.cn</span>
          </div>
        </div>
      </div>
      ${this.dialog()}
      <svg class="marks" width="1242" height="921" viewBox="0 0 1242 921">
        ${redArrow(346, 147, 364, 99)}
        ${redArrow(382, 424, 303, 413)}
        ${redArrow(389, 425, 577, 566)}
        ${redArrow(395, 855, 445, 885)}
      </svg>
    `;
  }
}
